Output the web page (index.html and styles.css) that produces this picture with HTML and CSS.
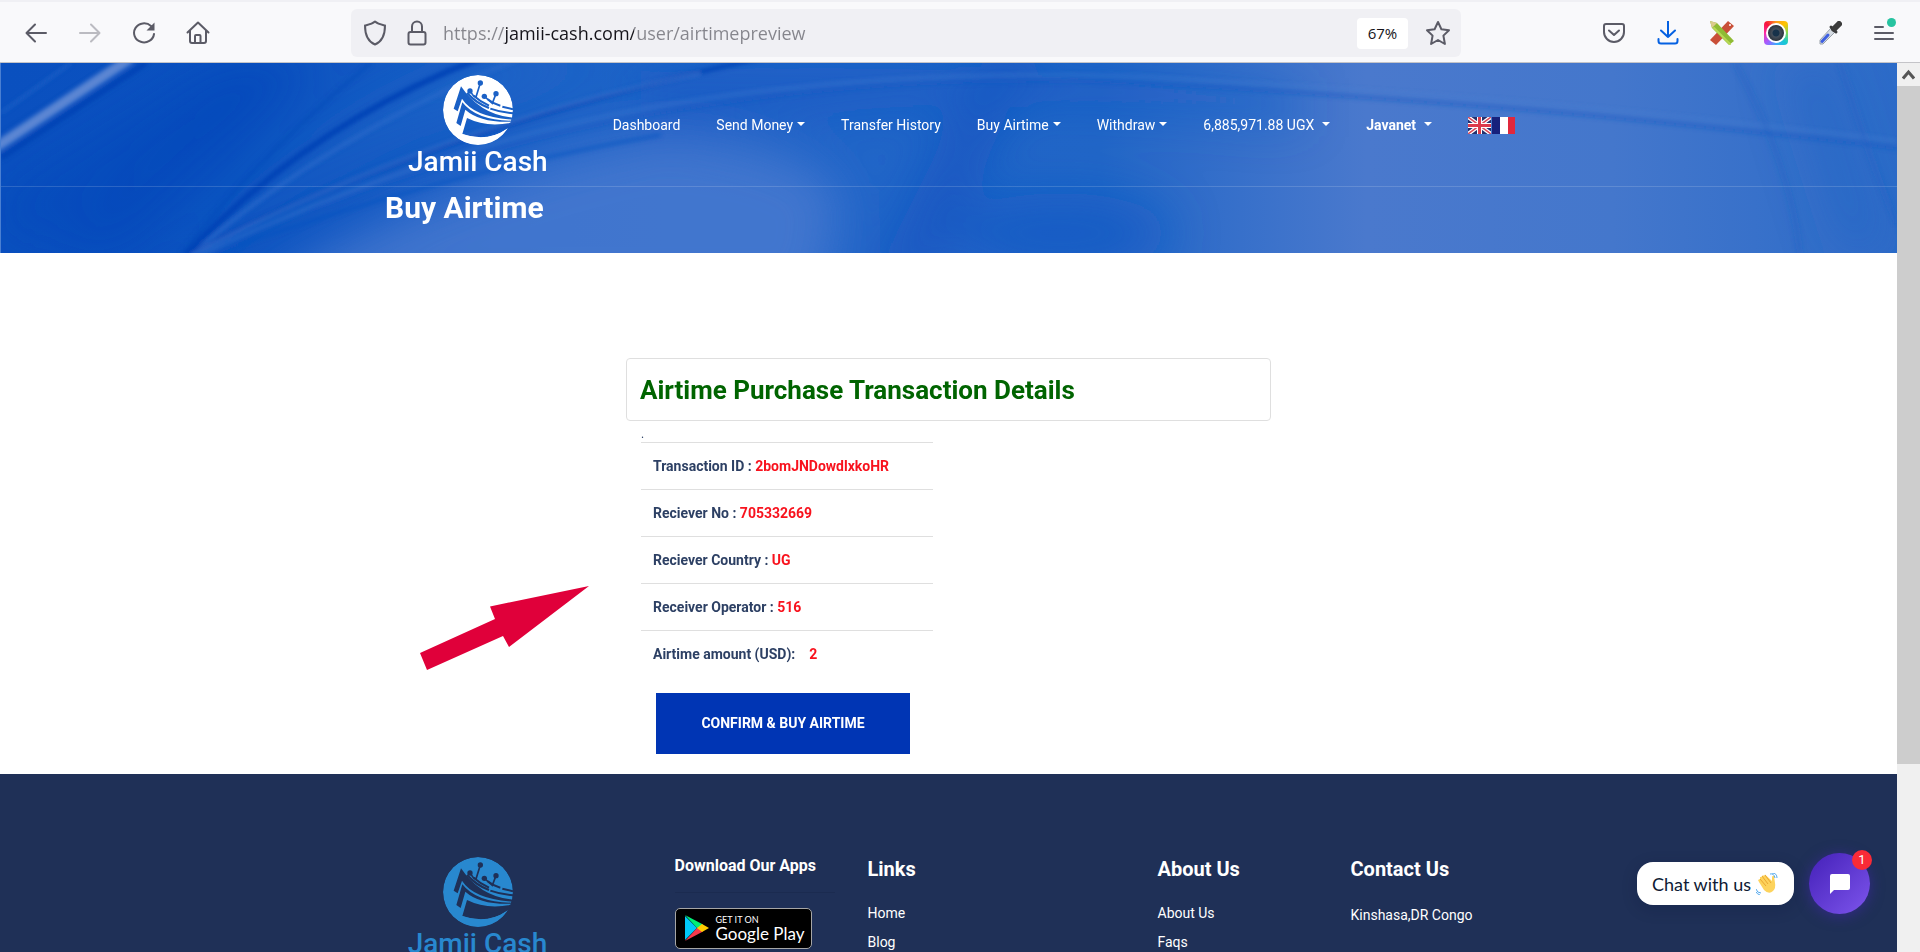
FILE: index.html
```html
<!DOCTYPE html>
<html lang="en">

<head>
  <meta charset="UTF-8" />
  <meta name="viewport" content="width=device-width, initial-scale=1.0" />
  <title>Buy Airtime - Jamii Cash</title>
  <link rel="stylesheet" href="styles.css">
</head>

<body>

  <!-- shared logo mark -->
  <svg class="defs" width="0" height="0" aria-hidden="true">
    <defs>
      <mask id="logo-cut" maskUnits="userSpaceOnUse" x="210" y="40" width="230" height="220">
        <circle cx="323" cy="151" r="105" fill="#fff" />
        <g fill="#000">
          <path d="M272 80 L250 147 L262 155 L275 117 Q310 172 428 180 L428 174 Q330 166 272 80Z" />
          <path d="M276 128 L258 190 L271 199 L285 150 Q330 190 425 186 L428 183 Q320 184 276 128Z" />
          <path d="M290 175 L276 223 Q350 250 410 207 L440 180 L428 188 Q350 205 290 175Z" />
          <circle cx="299" cy="94" r="8" />
          <circle cx="330" cy="70" r="8" />
          <circle cx="342" cy="110" r="8" />
          <circle cx="377" cy="102" r="8" />
        </g>
        <path d="M276 223 Q350 248 409 209 Q380 256 323 256 Q294 256 270 241Z" fill="#fff" />
        <g fill="none" stroke="#000" stroke-width="5">
          <path d="M299 94 L309 108 L317 112 L330 70" />
          <path d="M342 110 L366 131 L377 102" />
          <path d="M290 100 Q320 132 356 145" stroke-width="7" />
          <path d="M310 108 Q330 126 356 138 M360 147 Q390 158 428 161" stroke-width="6" />
          <path d="M352 119 Q368 132 390 138 M396 141 L428 149" stroke-width="6" />
        </g>
      </mask>
      <symbol id="logo-mark" viewBox="218 46 210 210">
        <circle cx="323" cy="151" r="105" fill="currentColor" mask="url(#logo-cut)" />
      </symbol>
    </defs>
  </svg>

  <div class="toolbar">
    <div class="toolbar-nav">
      <button class="tool" aria-label="Back">
        <svg width="24" height="24" viewBox="0 0 24 24"><path d="M22 12H3M11 3.500L2.500 12l8.500 8.500" /></svg>
      </button>
      <button class="tool tool-off" aria-label="Forward">
        <svg width="24" height="24" viewBox="0 0 24 24"><path d="M2 12h19M13 3.500l8.500 8.500-8.500 8.500" /></svg>
      </button>
      <button class="tool" aria-label="Reload">
        <svg width="24" height="24" viewBox="0 0 24 24"><path d="M22 13a10 9.500 0 1 1-3-8" /><path d="M22.500 1.500v8h-8z" fill="currentColor" stroke="none" /></svg>
      </button>
      <button class="tool" aria-label="Home">
        <svg width="24" height="24" viewBox="0 0 24 24"><path d="M1.500 11.500L12 1.500l10.500 10M4 9.500V20q0 2 2 2h12q2 0 2-2V9.500M9 22v-7q0-1 1-1h3.500q1 0 1 1v7" /></svg>
      </button>
    </div>

    <div class="urlbar">
      <svg class="tool-icon" width="24" height="26" viewBox="0 0 24 26"><path d="M12 1.500C9 4 6 4.500 2 5.500c0 8 1.500 15.500 10 19 8.500-3.500 10-11 10-19-4-1-7-1.500-10-4z" /></svg>
      <svg class="tool-icon" width="20" height="26" viewBox="0 0 20 26"><rect x="1.500" y="12" width="17" height="12.500" rx="2" /><path d="M5 12V6.500a5 5 0 0 1 10 0V12" /></svg>
      <input class="url" type="text" value="https://jamii-cash.com/user/airtimepreview" aria-label="Address">
      <button class="zoom-level">67%</button>
      <button class="tool" aria-label="Bookmark">
        <svg width="26" height="26" viewBox="0 0 26 26"><path d="M13 2l3.400 7.200 7.600 1-5.600 5.400 1.500 8.400L13 20l-6.900 4 1.500-8.400L2 10.200l7.600-1z" /></svg>
      </button>
    </div>

    <div class="toolbar-extra">
      <button class="tool" aria-label="Pocket">
        <svg width="24" height="24" viewBox="0 0 24 24"><path d="M4 3h16q2 0 2 2v6a10 10 0 0 1-20 0V5q0-2 2-2zM7 9.500l5 4.500 5-4.500" /></svg>
      </button>
      <button class="tool tool-blue" aria-label="Downloads">
        <svg width="24" height="24" viewBox="0 0 24 24"><path d="M12 0v16M5 9.500l7 6.500 7-6.500M2.500 18v2q0 2.500 2.500 2.500h14q2.500 0 2.500-2.500v-2" /></svg>
      </button>
      <button class="tool" aria-label="Measure">
        <svg width="26" height="26" viewBox="0 0 26 26">
          <g stroke="none">
            <path d="M19 1l6 5L7 25l-6-5z" fill="#c94f38" />
            <circle cx="21" cy="5" r="1" fill="#fff" />
            <path d="M1 1l7 2 17 18-5 4L3 8z" fill="#8fbb34" />
            <path d="M5 8L21 24" stroke="#b8d855" stroke-width="2" />
            <path d="M1 1l7 2-5 5z" fill="#dccb8c" />
          </g>
        </svg>
      </button>
      <button class="tool" aria-label="Screenshot">
        <span class="camera"><span class="camera-lens"></span></span>
      </button>
      <button class="tool" aria-label="Color picker">
        <svg width="24" height="24" viewBox="0 0 24 24">
          <path d="M13 7L2 19v4h3L17 11z" fill="#d5dbe2" stroke="#9aa2aa" stroke-width="1" />
          <path d="M4 20.500L10 14" stroke="#3e5fe0" stroke-width="3" />
          <path d="M13 6l5 5" stroke="#3c3c3c" stroke-width="3" />
          <path d="M16 8l5-5" stroke="#3c3c3c" stroke-width="6" />
        </svg>
      </button>
      <button class="tool menu" aria-label="Menu">
        <svg width="20" height="20" viewBox="0 0 20 20"><path d="M1 4h8M1 10h18M1 16h18" /></svg>
        <span class="menu-dot"></span>
      </button>
    </div>
  </div>

  <div class="window">
    <div class="page">

      <header class="hero">
        <svg class="hero-bg" viewBox="0 0 1897 190" preserveAspectRatio="none" aria-hidden="true">
          <defs>
            <linearGradient id="sky" x1="0" x2="1" y1="0" y2="0">
              <stop offset="0" stop-color="#0a50bf" />
              <stop offset=".12" stop-color="#0b52c0" />
              <stop offset=".3" stop-color="#1d62c7" />
              <stop offset=".45" stop-color="#2165c8" />
              <stop offset=".58" stop-color="#2266c7" />
              <stop offset=".72" stop-color="#4a79cd" />
              <stop offset=".85" stop-color="#4477cc" />
              <stop offset="1" stop-color="#2c6bc8" />
            </linearGradient>
            <filter id="soft" x="-20%" y="-20%" width="140%" height="140%"><feGaussianBlur stdDeviation="2" /></filter>
            <filter id="haze" x="-20%" y="-60%" width="140%" height="220%"><feGaussianBlur stdDeviation="24" /></filter>
          </defs>
          <rect width="1897" height="190" fill="url(#sky)" />
          <g filter="url(#haze)">
            <path d="M0 190L300 0h-90L0 130z" fill="#0647b9" opacity=".4" />
            <path d="M30 190L260 0h60L120 190z" fill="#0444b8" opacity=".5" />
            <path d="M200 190Q400 20 640 0H480Q320 60 190 190z" fill="#2a6cca" opacity=".6" />
            <path d="M240 240Q420 120 640 75Q780 70 840 130L820 240z" fill="#4a7ad0" opacity=".8" />
            <ellipse cx="1060" cy="170" rx="110" ry="40" fill="#0e5ac4" opacity=".7" />
            <path d="M990-20h50L930 220h-60z" fill="#0e50be" opacity=".6" />
            <path d="M640 10Q1000-10 1300 30V60Q900 20 640 80z" fill="#0f58c3" opacity=".5" />
            <path d="M1780 0l60 190h50L1830 0z" fill="#2463c4" opacity=".4" />
          </g>
          <g fill="none" filter="url(#soft)">
            <path d="M130-5L-5 84" stroke="#5b86d3" stroke-width="10" />
            <path d="M70 0L0 50" stroke="#2667ca" stroke-width="2" />
            <path d="M145 0L0 95" stroke="#0343b4" stroke-width="5" />
            <path d="M185 192Q310 60 480-5" stroke="#0343b6" stroke-width="6" />
            <path d="M190 192Q330 70 520-5" stroke="#2a6acb" stroke-width="3" />
            <path d="M180 192Q260 90 370 0" stroke="#0848b8" stroke-width="3" opacity=".6" />
            <path d="M187 192Q420 70 760-5" stroke="#0444b6" stroke-width="4" />
            <path d="M190 192Q440 62 700 10" stroke="#3c76cf" stroke-width="2" />
            <path d="M195 192Q420 95 640 53Q900 5 1180 22T1640 57T1897 85" stroke="#1459c3" stroke-width="4" opacity=".5" />
            <path d="M200 192Q420 87 640 46Q900 0 1180 16T1640 50T1897 78" stroke="#4a80d2" stroke-width="2" opacity=".6" />
            <path d="M210 192Q440 110 660 72" stroke="#0e53c0" stroke-width="3" opacity=".7" />
            <path d="M1735 0Q1790 100 1800 190M1840 0Q1870 100 1897 160" stroke="#2261c3" stroke-width="6" opacity=".3" />
          </g>
        </svg>

        <nav class="navbar">
          <div class="container navbar-inner">
            <a class="logo" href="#">
              <svg class="logo-mark" width="70" height="70"><use href="#logo-mark" /></svg>
              <span class="logo-text">Jamii Cash</span>
            </a>
            <div class="nav-links">
              <a href="#">Dashboard</a>
              <a class="dropdown" href="#">Send Money</a>
              <a href="#">Transfer History</a>
              <a class="dropdown" href="#">Buy Airtime</a>
              <a class="dropdown" href="#">Withdraw</a>
              <a class="dropdown wide" href="#">6,885,971.88 UGX</a>
              <a class="dropdown wide user" href="#">Javanet</a>
              <span class="flags">
                <a href="#" aria-label="English">
                  <svg width="23" height="17" viewBox="0 0 23 17">
                    <rect width="23" height="17" fill="#24306e" />
                    <path d="M0 0l23 17M23 0L0 17" stroke="#fff" stroke-width="4" />
                    <path d="M0 0l23 17M23 0L0 17" stroke="#d8485a" stroke-width="1.500" />
                    <path d="M11.500 0v17M0 8.500h23" stroke="#fff" stroke-width="5" />
                    <path d="M11.500 0v17M0 8.500h23" stroke="#dc3a4c" stroke-width="3" />
                  </svg>
                </a>
                <a href="#" aria-label="Français">
                  <svg width="23" height="17" viewBox="0 0 23 17">
                    <rect width="8" height="17" fill="#17217c" />
                    <rect x="8" width="8" height="17" fill="#fff" />
                    <rect x="16" width="7" height="17" fill="#e0283c" />
                  </svg>
                </a>
              </span>
            </div>
          </div>
        </nav>

        <div class="container">
          <h1 class="hero-title">Buy Airtime</h1>
        </div>
      </header>

      <main class="content">
        <div class="panel">
          <div class="card">
            <h2>Airtime Purchase Transaction Details</h2>
          </div>
          <div class="details">
            <p class="dot">.</p>
            <table class="details-table">
              <tr><th>Transaction ID : <span>2bomJNDowdlxkoHR</span></th></tr>
              <tr><th>Reciever No : <span>705332669</span></th></tr>
              <tr><th>Reciever Country : <span>UG</span></th></tr>
              <tr><th>Receiver Operator : <span>516</span></th></tr>
              <tr><th>Airtime amount (USD): &nbsp;&nbsp;&nbsp;<span>2</span></th></tr>
            </table>
            <button class="confirm">CONFIRM &amp; BUY AIRTIME</button>
          </div>
        </div>
        <svg class="arrow" width="170" height="85" viewBox="0 0 170 85" aria-hidden="true">
          <path d="M0 67L75 33 70 20.500 169 0 89 61 83 50 7 84z" fill="#e0003a" />
        </svg>
      </main>

      <footer class="footer">
        <div class="container footer-inner">
          <div class="col-3">
            <a class="logo logo-blue" href="#">
              <svg class="logo-mark" width="70" height="70"><use href="#logo-mark" /></svg>
              <span class="logo-text">Jamii Cash</span>
            </a>
          </div>
          <div class="col-2">
            <h4>Download Our Apps</h4>
            <hr>
            <a class="play" href="#">
              <svg width="24" height="26" viewBox="0 0 24 26">
                <path d="M0 1v24l12-12z" fill="#00c8fa" />
                <path d="M0 0l18 9.500-5.500 4z" fill="#00ee76" />
                <path d="M0 26l18-9.500-5.500-4z" fill="#f4384c" />
                <path d="M17 9l7 4-7 4-5-4z" fill="#ffcd00" />
              </svg>
              <span class="play-text"><small>GET IT ON</small>Google Play</span>
            </a>
          </div>
          <div class="col-3">
            <h3>Links</h3>
            <ul>
              <li><a href="#">Home</a></li>
              <li><a href="#">Blog</a></li>
            </ul>
          </div>
          <div class="col-2">
            <h3>About Us</h3>
            <ul>
              <li><a href="#">About Us</a></li>
              <li><a href="#">Faqs</a></li>
            </ul>
          </div>
          <div class="col-2">
            <h3>Contact Us</h3>
            <p class="address">Kinshasa,DR Congo</p>
          </div>
        </div>
      </footer>

      <div class="chat">
        <div class="chat-bubble">
          Chat with us
          <svg width="22" height="22" viewBox="0 0 22 22" aria-hidden="true">
            <path d="M3 9l5 8q5 5 9 1 3-3 2-8l-1-7q-2-1-2 2v3L9 1.500 8 3 7 2 5.500 4 4 4 4 6 2 7z" fill="#fdd35c" />
            <path d="M9 2l6 8M6 3l6 8M4 6l6 7" stroke="#eba72f" fill="none" />
            <path d="M14 1q4-1 5 4M16 0q5 0 5 5M0 16q1 4 5 4M0 19q1 2 4 3" stroke="#54a9ee" fill="none" />
          </svg>
        </div>
        <button class="chat-button" aria-label="Open chat">
          <svg width="22" height="22" viewBox="0 0 22 22"><path d="M3 1h16q2 0 2 2v12q0 2-2 2H5l-4 4V3q0-2 2-2z" fill="#fff" /></svg>
          <span class="chat-count">1</span>
        </button>
      </div>
    </div>

    <div class="scrollbar" aria-hidden="true">
      <div class="scroll-up">
        <svg width="13" height="12" viewBox="0 0 13 12"><path d="M1 9.500L6.500 3l5.500 6.500" fill="none" stroke="#555" stroke-width="3" /></svg>
      </div>
      <div class="scroll-thumb"></div>
    </div>
  </div>

</body>

</html>
```
FILE: styles.css
```css
* {
  box-sizing: border-box;
}

body {
  font-family: Roboto, Arial, sans-serif;
  font-size: 14px;
  margin: 0;
  height: 100vh;
  display: flex;
  flex-direction: column;
  overflow: hidden;
  background-color: #fff;
}

a {
  color: inherit;
  text-decoration: none;
}

button {
  font-family: inherit;
  border: none;
  padding: 0;
  cursor: pointer;
}

h1, h2, h3, h4, p, ul {
  margin: 0;
  padding: 0;
}

.defs {
  position: absolute;
}

/* Browser toolbar */
.toolbar {
  display: flex;
  align-items: center;
  flex: none;
  height: 63px;
  padding: 2px 24px 0 24px;
  background-color: #f9f9fb;
  border-top: 2px solid #f0f0f4;
  border-bottom: 1px solid #c4c4c8;
}

.toolbar-nav {
  display: flex;
  gap: 30px;
  width: 327px;
}

.tool {
  position: relative;
  display: flex;
  align-items: center;
  justify-content: center;
  width: 24px;
  height: 26px;
  background: none;
  color: #5b5b66;
}

.tool svg,
.tool-icon {
  flex: none;
  fill: none;
  stroke: currentColor;
  stroke-width: 2;
  stroke-linejoin: round;
  stroke-linecap: round;
  color: inherit;
}

.tool-off {
  color: #bbbbc1;
}

.tool-blue {
  color: #0561e2;
}

.urlbar {
  display: flex;
  align-items: center;
  width: 1110px;
  height: 48px;
  padding: 0 11px 0 12px;
  border-radius: 6px;
  background-color: #f0f0f4;
  color: #5b5b66;
}

.urlbar .tool-icon + .tool-icon {
  margin-left: 20px;
}

.url {
  flex: 1;
  margin-left: 16px;
  padding: 0;
  border: none;
  outline: none;
  font-family: "Open Sans", "Noto Sans", sans-serif;
  font-size: 18px;
  line-height: 24px;
  /* host is darker than the scheme and the path */
  background-image: linear-gradient(to right, #85858c 62px, #15141a 62px, #15141a 191px, #85858c 191px);
  -webkit-background-clip: text;
  background-clip: text;
  -webkit-text-fill-color: transparent;
}

.zoom-level {
  width: 51px;
  height: 31px;
  margin-right: 18px;
  border-radius: 4px;
  background-color: #fff;
  font-family: "Open Sans", "Noto Sans", sans-serif;
  font-size: 15px;
  color: #15141a;
}

.toolbar-extra {
  display: flex;
  gap: 30px;
  margin-left: auto;
}

.camera {
  display: flex;
  align-items: center;
  justify-content: center;
  flex: none;
  width: 24px;
  height: 24px;
  border-radius: 4px;
  background: conic-gradient(#ff9a1c, #ffc400, #7ed957, #17c9d2, #3fa8ff, #a55cff, #ff2ba5, #f7153c, #ff9a1c);
}

.camera-lens {
  width: 20px;
  height: 20px;
  border: 2px solid #fff;
  border-radius: 50%;
  background: radial-gradient(#17324a 3px, #46505c 4px, #2b333c 8px);
}

.menu-dot {
  position: absolute;
  top: -2px;
  right: 0;
  width: 9px;
  height: 9px;
  border-radius: 50%;
  background-color: #27c3a0;
}

/* Page area */
.window {
  display: flex;
  flex: 1;
  min-height: 0;
}

.page {
  position: relative;
  display: flex;
  flex-direction: column;
  flex: 1;
  min-width: 0;
  overflow: hidden;
}

.container {
  max-width: 1128px;
  margin: 0 auto;
}

.scrollbar {
  width: 23px;
  background-color: #f0f0f0;
}

.scroll-up {
  display: flex;
  align-items: center;
  justify-content: center;
  height: 23px;
}

.scroll-thumb {
  height: 78%;
  max-height: 678px;
  background-color: #cdcdcd;
}

/* Header */
.hero {
  position: relative;
  flex: none;
  border-left: 1px solid #4a7fd2;
  color: #fff;
}

.hero-bg {
  position: absolute;
  width: 100%;
  height: 100%;
}

.navbar {
  position: relative;
  height: 124px;
  border-bottom: 1px solid rgba(255, 255, 255, 0.15);
}

.navbar-inner {
  display: flex;
}

.logo {
  display: flex;
  flex-direction: column;
  align-items: center;
  width: 140px;
  margin: 12px 0 0 23px;
}

.logo-text {
  font-size: 28px;
  font-weight: 500;
  line-height: 34px;
  white-space: nowrap;
}

.logo-blue {
  margin-top: 0;
  color: #2888cf;
}

.nav-links {
  display: flex;
  align-items: center;
  gap: 36px;
  height: 124px;
  margin-left: 65px;
  white-space: nowrap;
}

.dropdown::after {
  content: "";
  display: inline-block;
  margin-left: 4px;
  vertical-align: 4px;
  border: 4px solid transparent;
  border-top-color: #fff;
  border-bottom: 0;
}

.wide::after {
  margin-left: 8px;
}

.user {
  font-weight: 700;
}

.flags {
  display: flex;
  gap: 1px;
}

.flags svg {
  display: block;
}

.hero-title {
  position: relative;
  height: 66px;
  font-size: 30px;
  line-height: 41px;
}

/* Transaction details */
.content {
  position: relative;
  flex: none;
  padding: 105px 0 20px;
}

.panel {
  max-width: 645px;
  margin: 0 auto;
}

.card {
  padding: 12px 13px 10px;
  border: 1px solid #dfdfdf;
  border-radius: 4px;
}

.card h2 {
  font-size: 26px;
  line-height: 39px;
  color: #006400;
}

.details {
  padding: 8px 15px 0;
  color: #2d4064;
}

.dot {
  height: 13px;
  font-size: 12px;
  line-height: 10px;
}

.details-table {
  width: 292px;
  border-collapse: collapse;
}

.details-table th {
  height: 47px;
  padding: 0 12px;
  border-top: 1px solid #dfdfdf;
  text-align: left;
}

.details-table span {
  color: #f8121d;
}

.confirm {
  display: block;
  width: 254px;
  height: 61px;
  margin: 15px 0 0 15px;
  background-color: #0035b4;
  color: #fff;
  font-size: 14px;
  font-weight: 700;
}

.arrow {
  position: absolute;
  top: 333px;
  left: calc(50% - 529px);
}

/* Footer */
.footer {
  flex: 1 0 auto;
  padding-top: 83px;
  background-color: #1f3057;
  color: #fff;
}

.footer-inner {
  display: flex;
  height: 95px;
}

.col-3 {
  flex: none;
  width: 290px;
}

.col-2 {
  flex: none;
  width: 193px;
}

.footer h3 {
  margin-bottom: 18px;
  font-size: 20px;
  line-height: 24px;
}

.footer h4 {
  font-size: 16px;
  line-height: 18px;
}

.footer hr {
  width: 160px;
  margin: 17px 0 15px;
  border: 0;
  border-top: 1px solid #1b2b50;
}

.footer ul {
  list-style: none;
}

.footer li {
  line-height: 29px;
}

.address {
  line-height: 33px;
}

.play {
  display: flex;
  align-items: center;
  gap: 7px;
  width: 137px;
  height: 41px;
  padding-left: 9px;
  border: 1px solid #a6a6a6;
  border-radius: 5px;
  background-color: #000;
}

.play-text {
  display: flex;
  flex-direction: column;
  font-family: Lato, sans-serif;
  font-size: 17px;
  line-height: 18px;
  white-space: nowrap;
}

.play-text small {
  font-size: 9px;
  line-height: 11px;
}

/* Chat widget */
.chat {
  position: absolute;
  right: 27px;
  bottom: 38px;
  display: flex;
  align-items: center;
  gap: 15px;
}

.chat-bubble {
  display: flex;
  align-items: center;
  gap: 5px;
  height: 43px;
  padding: 0 16px 0 15px;
  border-radius: 16px;
  background-color: #fff;
  box-shadow: 0 4px 16px rgba(0, 15, 50, 0.2);
  color: #0e1a34;
  font-family: Lato, sans-serif;
  font-size: 18px;
}

.chat-button {
  position: relative;
  display: flex;
  align-items: center;
  justify-content: center;
  width: 61px;
  height: 61px;
  border-radius: 50%;
  background: linear-gradient(135deg, #4420b8, #7d55ec);
  box-shadow: 0 2px 14px rgba(74, 36, 190, 0.5);
}

.chat-count {
  position: absolute;
  top: -3px;
  right: -2px;
  width: 20px;
  border-radius: 50%;
  background-color: #f92b37;
  color: #fff;
  font-size: 13px;
  line-height: 20px;
}
```
